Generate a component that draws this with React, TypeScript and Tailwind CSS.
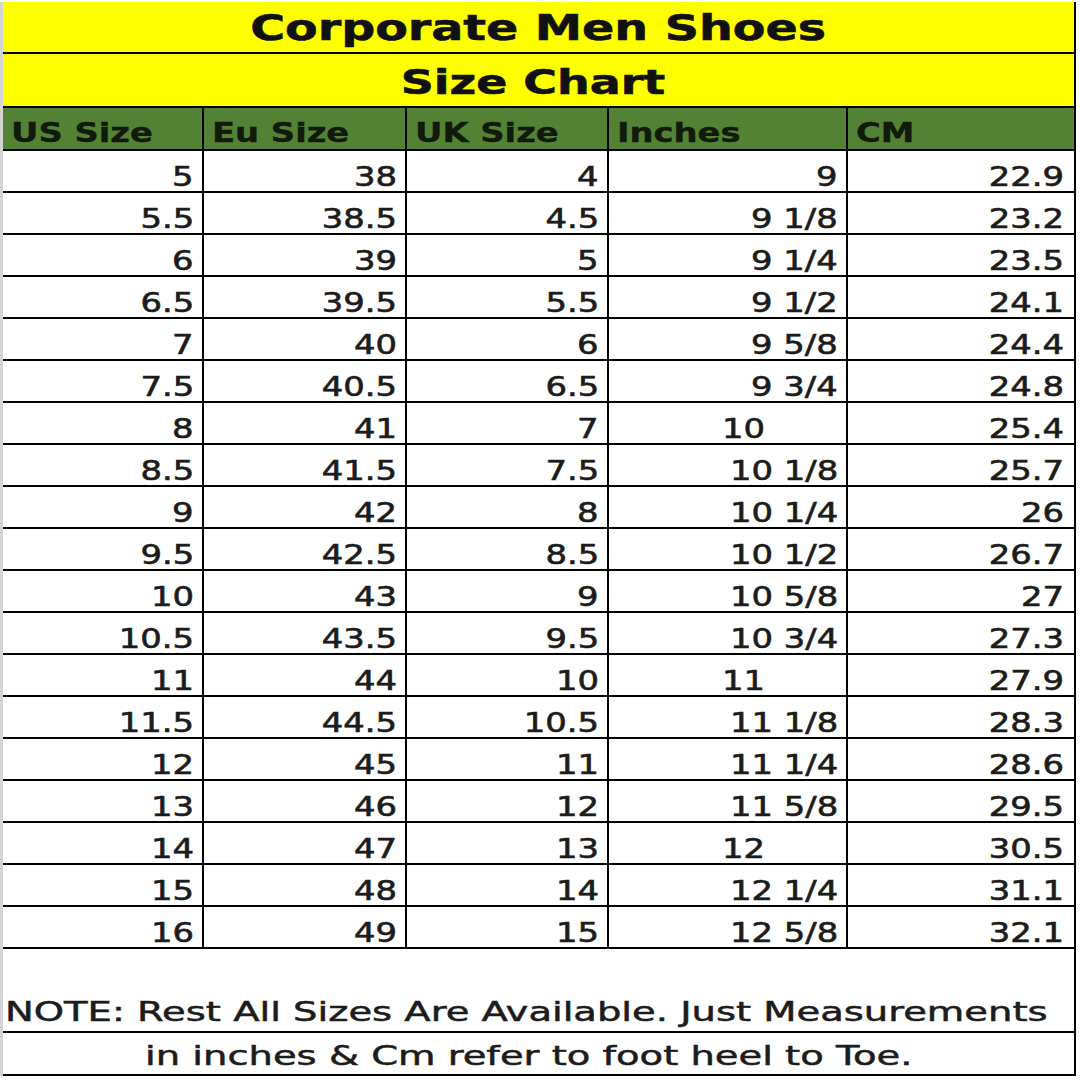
const rows: [string, string, string, string, string][] = [
  ["5", "38", "4", "9", "22.9"],
  ["5.5", "38.5", "4.5", "9 1/8", "23.2"],
  ["6", "39", "5", "9 1/4", "23.5"],
  ["6.5", "39.5", "5.5", "9 1/2", "24.1"],
  ["7", "40", "6", "9 5/8", "24.4"],
  ["7.5", "40.5", "6.5", "9 3/4", "24.8"],
  ["8", "41", "7", "10", "25.4"],
  ["8.5", "41.5", "7.5", "10 1/8", "25.7"],
  ["9", "42", "8", "10 1/4", "26"],
  ["9.5", "42.5", "8.5", "10 1/2", "26.7"],
  ["10", "43", "9", "10 5/8", "27"],
  ["10.5", "43.5", "9.5", "10 3/4", "27.3"],
  ["11", "44", "10", "11", "27.9"],
  ["11.5", "44.5", "10.5", "11 1/8", "28.3"],
  ["12", "45", "11", "11 1/4", "28.6"],
  ["13", "46", "12", "11 5/8", "29.5"],
  ["14", "47", "13", "12", "30.5"],
  ["15", "48", "14", "12 1/4", "31.1"],
  ["16", "49", "15", "12 5/8", "32.1"],
];

const headers = ["US Size", "Eu Size", "UK Size", "Inches", "CM"];
const font = { fontFamily: '"DejaVu Sans", Verdana, sans-serif' };

// whole-number inches sit left-ish in the sheet, not right aligned
const isWhole = (v: string) => !v.includes(" ") && v.length === 2;

const cols = "grid grid-cols-[201px_203px_202px_239px_1fr]";

export default function App() {
  return (
    <div className="w-[1080px] h-[1080px] bg-white pt-[2px] text-[#1c1c1c]" style={font}>
      <div className="w-[1076px] h-[1074px] border-l-[3px] border-l-[#d4d4d4] border-r-2 border-r-black flex flex-col">
        {/* title */}
        <div className="h-[52px] bg-[#ffff00] border-b-2 border-black flex items-end justify-center pb-[6px]">
          <span className="inline-block font-bold text-[36px] leading-none scale-x-[1.32] whitespace-nowrap text-[#111] [-webkit-text-stroke:0.6px_#111]">
            Corporate Men Shoes
          </span>
        </div>
        <div className="h-[54px] bg-[#ffff00] border-b-2 border-black flex items-end justify-center pb-[7px] pr-[12px]">
          <span className="inline-block font-bold text-[34px] leading-none scale-x-[1.35] whitespace-nowrap text-[#111] [-webkit-text-stroke:0.6px_#111]">
            Size Chart
          </span>
        </div>

        {/* column header */}
        <div className={`${cols} h-[43px] bg-[#548235] border-b-2 border-black`}>
          {headers.map((h, i) => (
            <div
              key={h}
              className={`flex items-end pl-[8px] pb-[3px] ${i < 4 ? "border-r-2 border-black" : ""}`}
            >
              <span className="inline-block origin-left font-bold text-[27px] leading-none scale-x-[1.25] whitespace-nowrap text-[#111a0b] [-webkit-text-stroke:0.4px_#111a0b]">
                {h}
              </span>
            </div>
          ))}
        </div>

        {/* data */}
        {rows.map((r) => (
          <div key={r[0]} className={`${cols} h-[42px] border-b-2 border-black`}>
            {r.map((v, i) => (
              <div
                key={i}
                className={`flex items-end pb-[1px] ${i < 4 ? "border-r-2 border-black" : ""} ${
                  i === 3 && isWhole(v) ? "justify-start pl-[113px]" : "justify-end pr-[8px]"
                } ${i === 4 ? "pr-[10px]" : ""}`}
              >
                <span
                  className={`inline-block text-[26px] leading-none scale-x-[1.3] whitespace-nowrap [-webkit-text-stroke:0.6px_#1c1c1c] ${
                    i === 3 && isWhole(v) ? "origin-left" : "origin-right"
                  }`}
                >
                  {v}
                </span>
              </div>
            ))}
          </div>
        ))}

        {/* note */}
        <div className="h-[84px] border-b-2 border-black flex items-end pl-[2px] pb-[6px]">
          <span className="inline-block origin-left text-[26px] leading-none scale-x-[1.48] whitespace-nowrap [-webkit-text-stroke:0.5px_#1c1c1c]">
            NOTE: Rest All Sizes Are Available. Just Measurements
          </span>
        </div>
        <div className="flex-1 border-b-2 border-black flex items-end pl-[142px] pb-[5px]">
          <span className="inline-block origin-left text-[26px] leading-none scale-x-[1.48] whitespace-nowrap [-webkit-text-stroke:0.5px_#1c1c1c]">
            in inches &amp; Cm refer to foot heel to Toe.
          </span>
        </div>
      </div>
    </div>
  );
}
